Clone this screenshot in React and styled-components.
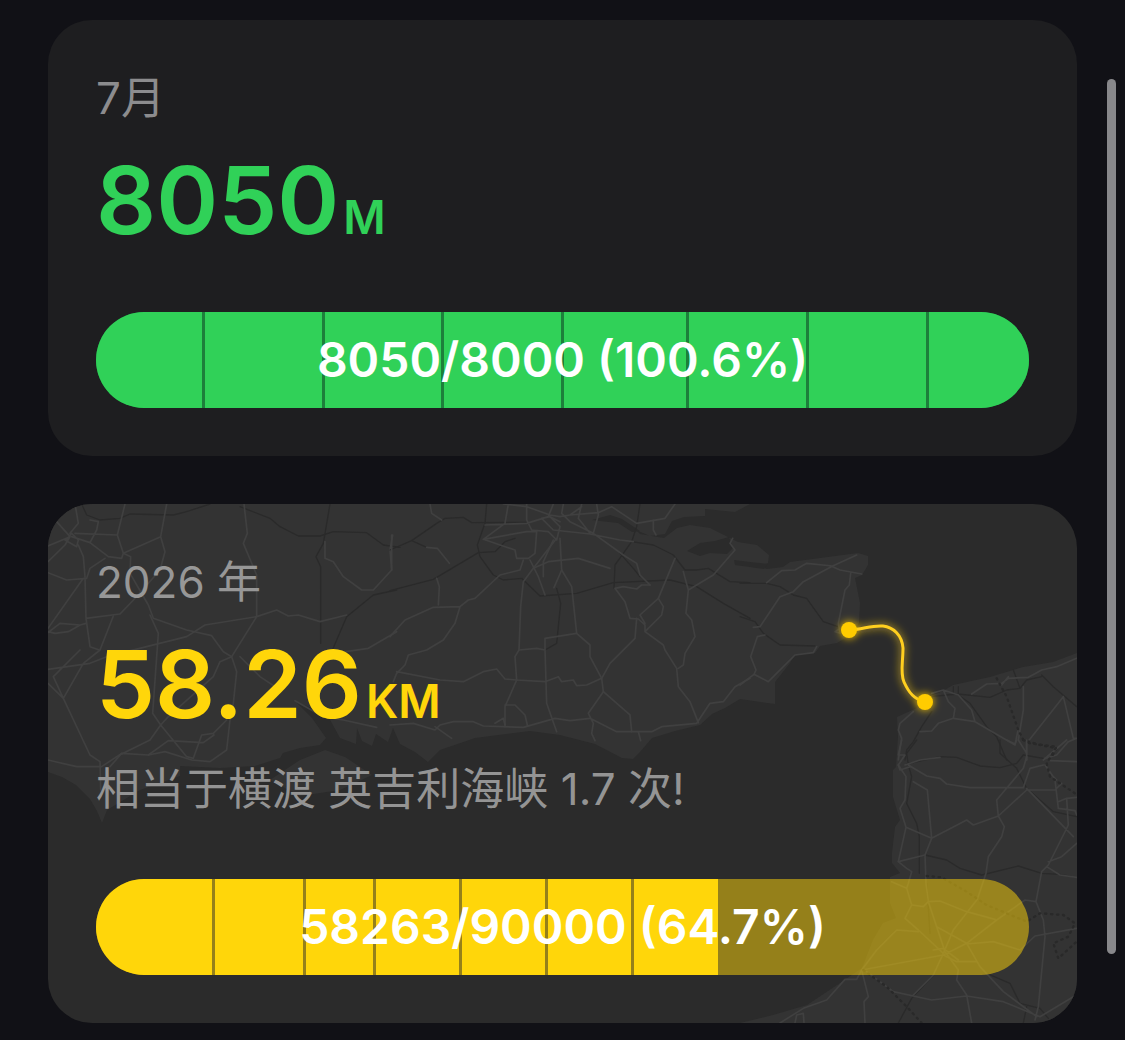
import React from 'react';
import styled, { createGlobalStyle } from 'styled-components';

const GlobalStyle = createGlobalStyle`
  * {
    box-sizing: border-box;
  }

  body {
    margin: 0;
    background: #111116;
    font-family: Inter, "Noto Sans CJK SC", sans-serif;
  }
`;

const Page = styled.main`
  display: flex;
  flex-direction: column;
  gap: 48px;
  padding: 20px 48px 17px;
`;

const Card = styled.section`
  position: relative;
  display: flex;
  flex-direction: column;
  padding: 48px;
  border-radius: 44px;
  overflow: hidden;
  background: ${({ $bg }) => $bg};
`;

const MapSvg = styled.svg`
  position: absolute;
  inset: 0;
  width: 100%;
  height: 100%;
`;

const Body = styled.div`
  position: relative;
  display: flex;
  flex-direction: column;
`;

const Period = styled.h2`
  margin: 0 0 24px;
  font-size: 44px;
  font-weight: 380;
  line-height: 60px;
  color: ${({ $color }) => $color};
`;

const Total = styled.p`
  display: flex;
  align-items: baseline;
  gap: 4px;
  margin: 0;
  font-size: 94px;
  font-weight: 600;
  line-height: 96px;
  color: ${({ $color }) => $color};
`;

const Unit = styled.span`
  font-size: 46px;
  line-height: 48px;
`;

const Note = styled.p`
  margin: 27px 0 0;
  font-size: 44px;
  font-weight: 380;
  line-height: 60px;
  color: #949494;
`;

const Bar = styled.div`
  display: grid;
  height: 96px;
  margin-top: 64px;
  border-radius: 48px;
  overflow: hidden;
  background: ${({ $track }) => $track};

  ${Note} + & {
    margin-top: 60px;
  }
`;

const Segments = styled.div`
  grid-area: 1 / 1;
  display: flex;
  gap: 3px;
`;

const Segment = styled.span`
  background: ${({ $color }) => $color};
`;

const BarLabel = styled.span`
  grid-area: 1 / 1;
  place-self: center;
  z-index: 1;
  font-size: 48px;
  font-weight: 600;
  line-height: 60px;
  white-space: nowrap;
  color: #fff;
`;

const ScrollThumb = styled.div`
  position: fixed;
  top: 79px;
  right: 9px;
  bottom: 86px;
  width: 9px;
  border-radius: 5px;
  background: #88888b;
`;

// Land outlines and water, in map units
const LAND = [
  'M48 504H750L735 512L705 509V516L684 517L672 521L665 534L650 536L636 530L640 534L664 538L677 528L690 525L710 528L724 535L738 542L757 545L769 555L768 563L760 567L767 569L783 567L790 562L858 553L868 556L868 565L862 575L855 578L860 603L859 623L847 637L837 643L820 646L815 653L795 655L790 663L775 682V704L740 699L725 708L712 714L700 725L675 731L652 738L640 752L633 759L622 758L595 744L560 735L530 731L475 738L440 750L428 762L415 752L400 744L393 728L388 742L376 734L372 746L362 741L357 728L356 744L340 738L328 716L312 708L296 702L312 718L326 738L320 745L300 748L283 753L280 758L255 766L220 768L180 766L180 776L140 790L107 810L102 823L97 811L90 799L76 785L62 777L48 772Z',
  'M270 780L300 760L325 750L345 757L372 775L340 790L300 796Z',
  'M1077 653L1053 662L1023 667L990 677L953 685L943 691L920 700L917 708L897 717L898 737L896 767L893 770V797L900 820L895 827L892 853V863L900 873L890 877V903L896 918L883 923L873 940L862 968L840 983L807 1005L773 1015L740 1023H1077Z',
];

const WATER = [
  'M687 551L700 543L715 541L729 537L733 548L727 554L710 553L700 556Z',
  'M734 560L750 562L768 564L764 569L735 565Z',
  'M592 520L610 515L622 519L640 531L632 532L618 523L600 521Z',
];

// The map is drawn tile by tile, three tile units to one map unit
const TILES = [
  {
    x: 40,
    y: 490,
    roads: [
      'M24 215L75 165L90 140L50 95M90 140L24 168M90 130L115 100L105 42M95 140L150 158L205 200L245 205M105 130L232 135L255 42M150 90L175 95L170 120L150 158M75 150L110 170L115 150L95 130L80 150M115 165L130 200L135 260L138 385L150 470L178 480M232 135L250 190L362 140L380 42M362 140L375 185L360 240L290 320L240 372L138 385M245 205L250 190L272 200L270 250L325 345L340 385L440 420L515 437L550 485L575 500L590 545L580 640L570 690L560 780L510 815L455 810L375 785L325 795L245 790L210 830',
      'M612 42L622 130L610 160L650 255V380L575 500M650 380L710 360L745 378L775 375L840 395L920 375M650 380L495 405L440 440L200 500L150 520L24 538M330 375L355 430L338 670L362 705L330 750L245 792M362 705L440 800L460 805L485 735L520 730L560 690M325 795L385 752L490 758L522 735M24 428L60 400L120 405M24 425L45 430L85 425L120 405L138 400M24 415L130 265M195 205L150 235L140 265L80 270L24 248M220 378L180 480L130 520L70 625L24 580M120 480L40 560L70 625L150 795L180 815L182 900M24 810L110 830H185L245 790',
      'M855 155V205L880 215L910 260L965 300H1000L1055 240L1050 180L1058 135M880 490L985 475L1070 425M765 632L850 680L910 690L1010 712M575 500L540 515L520 560L385 680L362 705M600 500L660 560L720 600',
    ],
    lines: [
      'M125 42L140 75L180 90L240 85L270 72L400 75L440 65L510 42M600 50L690 85L720 110L775 138H840L880 125L980 128L1030 165L1080 172M870 42L850 160L828 200L842 230V460M1070 300L1000 315L920 380L875 485',
    ],
  },
  {
    x: 390,
    y: 490,
    roads: [
      'M120 42L125 70L155 90M340 42L410 50L480 75L510 80L540 75L575 50M410 42V90L425 120L475 125M355 42L345 100L280 148M285 105L410 100L475 80L490 42M510 95L480 80L455 85L490 120L600 132L690 150L730 155M520 42L515 70L540 95L610 130L700 195L740 220L750 255L780 285M575 42L565 85L600 130M620 42L625 75L610 130M540 75L625 68L665 50L740 100L825 85L855 42M790 90V120L798 135M475 125L500 150L510 110L480 80M440 125L435 190L415 205L380 205L375 180L280 148M280 148L410 125L440 125M500 145L430 235L400 275L392 350L387 480L375 500L380 570L345 650V710M510 145L515 240L545 290L560 430L600 465V500L635 565L640 605L720 675L725 725',
      'M400 210L390 240L330 255L255 325L235 330L210 350L195 400L160 450L110 480L55 495L45 525L20 550L10 575M210 350L130 352L45 390L0 440M140 265L148 290L145 345M20 545L150 570L220 575L280 545L320 537L345 567L380 570L465 575L505 560L515 575L550 570L560 587L590 585L635 565L660 520L735 445L740 385M387 480L440 475L465 480V445L560 430M465 480L470 640L500 725M0 705L70 700L135 720L150 705L190 695H250L280 708L400 712L495 685L540 692L600 685L680 725H785L815 710L920 700L960 640L1000 635L1035 590L1080 565M135 710L185 745M345 645H375L405 675L412 705M315 700L340 685L345 705M640 605L595 670L610 700L605 730L615 752M745 725L752 752',
      'M420 210L445 260L465 315M430 235L475 215L565 205L660 235M490 150L460 215V260M515 240L492 293M675 295L700 290L740 297L755 285H780M675 295L705 335L720 385L745 387L765 405V425L820 465L825 480L860 535L865 590L900 635L925 698M855 205L805 325L750 375L765 400M805 325L820 350L815 375L765 425M880 245L895 300L888 370L905 390L915 440L885 490L880 525L865 535M895 300L970 255L1035 180L1020 160L1028 145M110 172L142 175L178 220M5 135V240',
    ],
    lines: [
      'M0 180L65 152L140 100L165 85L220 82L245 98L410 97M290 42L285 100L262 165L270 200L310 255L340 270L395 265L450 318L560 310L670 278L840 270L920 290L1000 340L1080 385M0 302L130 268L265 188L315 185L345 155L375 145M750 42L740 110L725 155L675 225L672 295M690 190L730 235L750 260M725 155L790 165L850 195L885 240H920L955 235L1020 275L1080 278M500 295L512 340L500 460L465 480M65 152L110 172',
    ],
  },
  {
    x: 740,
    y: 490,
    roads: [
      'M80 278L125 242L165 240L200 220L278 228L350 195M278 228L190 275L160 305L120 320L60 410L40 412M278 230L300 240L365 252M332 250L328 285L315 300L295 400L300 430L285 425L300 415M0 585L42 553L85 575L165 495L220 488L230 470M42 553L48 540L32 500L52 440L75 435',
      'M1010 505L950 530L905 540L865 562L805 565L785 580L740 582L695 612M805 560L785 585M610 600L625 635L645 655L640 685L705 695L825 765L835 715M655 615L695 660L705 695M575 610L610 600L655 615M540 725L575 723L595 700L640 685M850 590V660L835 750L860 790M970 620L1000 745H1010M970 620L860 760V810M1010 745L985 755L950 795L915 805M520 665L480 700L475 720L485 745L475 810',
    ],
    lines: [
      'M0 280H80L120 290L160 315L200 325L250 395L300 412M0 380L45 395L70 430L120 465L225 468M570 620L655 612L750 622L800 600L840 595L860 570L905 560M905 555L940 590L1010 650M640 590V612M655 590V612M655 615L690 640L740 710L770 740L800 810M820 540L840 595M575 665L545 710L520 755L500 780L495 810',
    ],
    dots: ['M770 565L800 620L835 720L850 750L900 765L950 775L935 800'],
  },
  {
    x: 740,
    y: 740,
    roads: [
      'M485 0L475 45H495L475 75L498 110L495 180L480 205L498 262L475 365L500 385L515 395L505 430L500 445L455 425M500 445L515 495L495 535L535 570L610 640M495 75L540 60L600 52M505 75L560 108L600 115L620 132L690 143H850L870 85L910 75M520 125L562 150L575 295L555 345L558 430L565 485L590 560L615 635L655 690L650 720L680 765L695 849M498 262L575 295L680 240L700 255L775 228L770 180L850 85L860 50M775 228L860 150M775 228L793 260L785 290L745 350L738 400L712 478L640 570L610 640L580 705L520 765',
      'M860 145L1000 290M860 150H945L965 130M945 120L955 205L1005 212L1010 225M955 185L980 175L1010 172M980 175L985 255L925 375L905 395L888 485L910 540L915 590L895 800L885 840M1010 310L965 350L925 365M920 380L960 405L1010 412M888 485L855 480L770 540L680 610L610 645M565 485L600 483L680 515L765 538M590 560L680 610L720 680L790 755L890 830M680 612L760 605L840 630L885 588L1010 565M475 365L555 345M535 575L470 570L410 630L365 690L610 645L650 665L710 665M365 690L350 718H315L260 780L190 805L120 849M365 690L385 770L372 785L375 849M380 695L460 755L575 780L680 768L790 785L900 830L1000 770M165 849L170 825L190 820L192 849M515 495L550 500L565 485M655 660L610 625L580 630M860 60V0M910 60L980 0M930 62L1010 65M915 75L940 110L950 120M800 0L825 12L830 0M475 75L480 90L510 80',
    ],
    lines: [
      'M530 0L500 40L505 75L515 110L500 190L530 250L538 290V400M500 72L600 50L650 52L720 78L780 83L830 70L850 45L910 55M780 0V40L830 85L860 145L940 215L1010 230M555 345L620 360L660 385L725 405L835 378L905 400L960 403L1010 412M560 430L570 580M580 705L515 775L475 849M740 700L810 730L840 790L900 805L925 835M850 849L860 800',
    ],
    dots: ['M850 0L870 10L950 20L920 70L930 110L1005 160M560 408L605 412L680 455L740 495L860 545L900 520L970 525L1005 550L985 590L940 610L955 655L1010 605M370 690L440 740L500 800L545 849'],
  },
];

const ChannelMap = () => (
  <MapSvg viewBox="48 504 1029 519" preserveAspectRatio="xMidYMid slice" aria-hidden="true">
    {LAND.map((d) => <path key={d} d={d} fill="#333333" />)}
    {WATER.map((d) => <path key={d} d={d} fill="#2b2b2b" />)}
    {TILES.map(({ x, y, roads, lines, dots = [] }) => (
      <g
        key={`${x}-${y}`}
        transform={`translate(${x} ${y}) scale(0.33333)`}
        fill="none"
        strokeLinejoin="round"
        strokeLinecap="round"
      >
        {lines.map((d) => <path key={d} d={d} stroke="#2a2a2a" strokeWidth="4" />)}
        {roads.map((d) => <path key={d} d={d} stroke="#404040" strokeWidth="5" />)}
        {dots.map((d) => <path key={d} d={d} stroke="#292929" strokeWidth="7" strokeDasharray="4 14" />)}
      </g>
    ))}
    <defs>
      <filter id="glow" x="-50%" y="-50%" width="200%" height="200%">
        <feGaussianBlur stdDeviation="4" />
      </filter>
      <g id="route">
        <path
          d="M849 630C862 630 871 625 883 626C893 627 902 635 903 648C903 662 900 673 904 682C909 693 914 699 925 702"
          fill="none"
          stroke="#ffcf1f"
          strokeWidth="3"
        />
        <circle cx="849" cy="630" r="8" fill="#ffcc00" />
        <circle cx="925" cy="702" r="8" fill="#ffcc00" />
      </g>
    </defs>
    <use href="#route" filter="url(#glow)" />
    <use href="#route" />
  </MapSvg>
);

const Progress = ({ color, track, segments, rest = 0, value, max, label }) => (
  <Bar $track={track} role="progressbar" aria-valuenow={Math.min(value, max)} aria-valuemax={max} aria-valuetext={label}>
    <Segments>
      {segments.map((size, i) => (
        <Segment key={i} $color={color} style={{ flex: `${size} 1 0` }} />
      ))}
      {rest > 0 && <span style={{ flex: `${rest} 1 0` }} />}
    </Segments>
    <BarLabel>{label}</BarLabel>
  </Bar>
);

const App = () => (
  <>
    <GlobalStyle />
    <Page>
      <Card $bg="#1e1e20">
        <Body>
          <Period $color="#8c8c8e">7月</Period>
          <Total $color="#30d158">8050<Unit>M</Unit></Total>
          <Progress
            color="#30d158"
            track="#1d7f3b"
            segments={[106, 117, 116, 117, 122, 117, 117, 100]}
            value={8050}
            max={8000}
            label="8050/8000 (100.6%)"
          />
        </Body>
      </Card>

      <Card $bg="#2b2b2b">
        <ChannelMap />
        <Body>
          <Period $color="#979797">2026 年</Period>
          <Total $color="#ffd60a">58.26<Unit>KM</Unit></Total>
          <Note>相当于横渡 英吉利海峡 1.7 次!</Note>
          <Progress
            color="#ffd60a"
            track="rgba(255, 214, 10, 0.5)"
            segments={[116, 88, 67, 83, 83, 83, 84]}
            rest={308}
            value={58263}
            max={90000}
            label="58263/90000 (64.7%)"
          />
        </Body>
      </Card>
    </Page>
    <ScrollThumb />
  </>
);

export default App;
